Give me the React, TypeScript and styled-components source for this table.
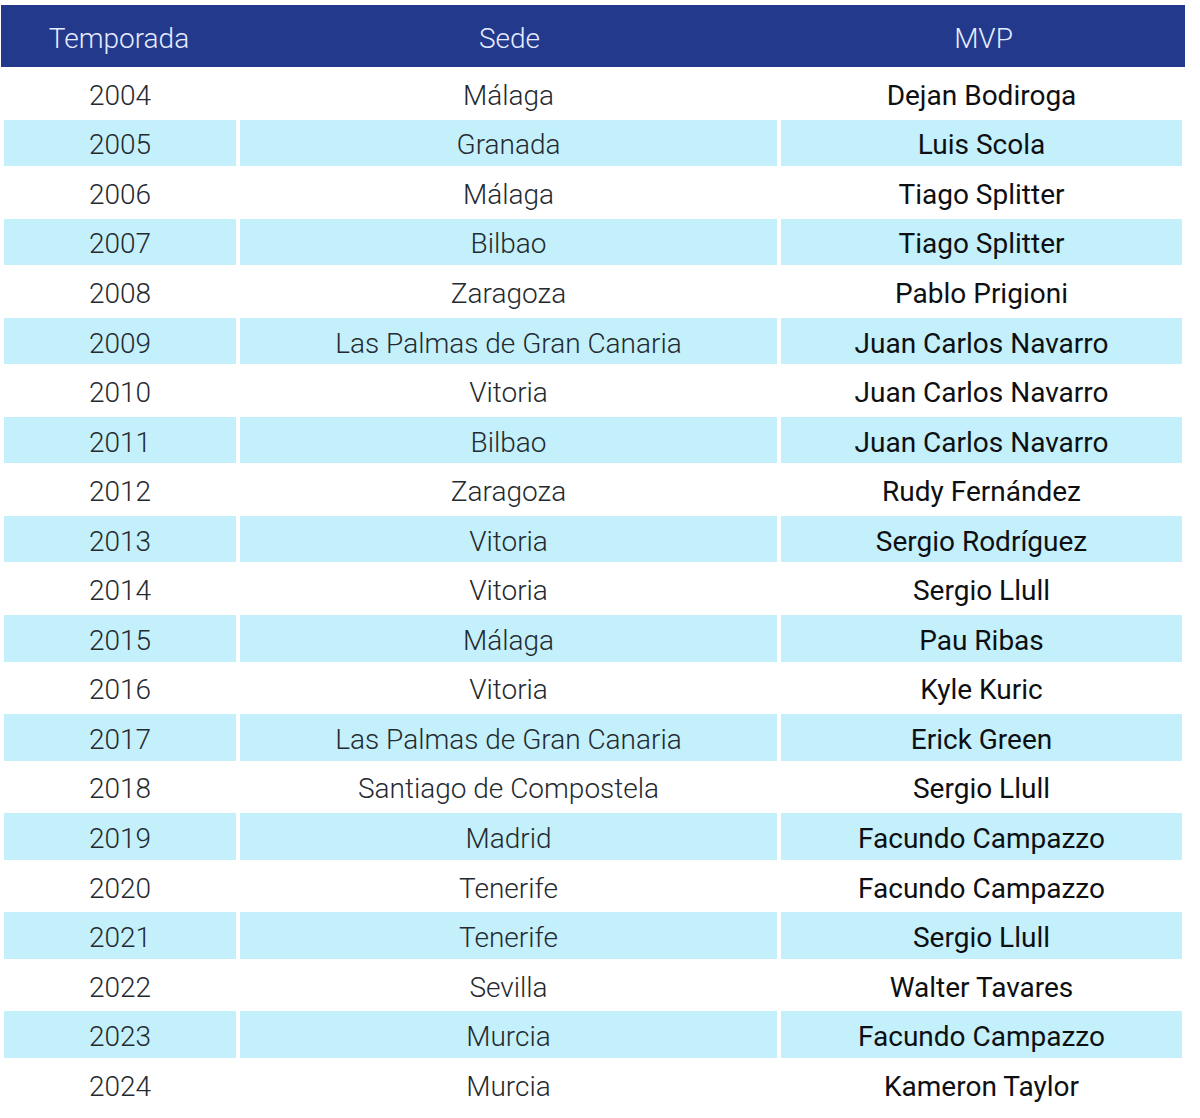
import React from 'react';
import styled, { createGlobalStyle } from 'styled-components';

const GlobalStyle = createGlobalStyle`
  html, body {
    margin: 0;
    padding: 0;
    background: #ffffff;
  }
  body {
    font-family: Roboto, "Liberation Sans", Arial, sans-serif;
  }
`;

const Page = styled.div`
  padding: 5px 0 0 1px;
  width: 1184px;
`;

const HeaderBar = styled.div`
  display: grid;
  grid-template-columns: 236px 545px 403px;
  height: 62px;
  background: #233a8c;
`;

const HeaderCell = styled.div`
  display: flex;
  align-items: center;
  justify-content: center;
  padding-top: 4px;
  font-weight: 300;
  font-size: 28px;
  color: #e6ecff;
`;

const Body = styled.div`
  display: flex;
  flex-direction: column;
  gap: 3px;
  padding: 3px 3px 0;
`;

const Row = styled.div`
  display: grid;
  grid-template-columns: 232px 537px 401px;
  column-gap: 4px;
  height: 46.55px;
`;

const Cell = styled.div<{ $striped: boolean; $bold?: boolean }>`
  display: flex;
  align-items: center;
  justify-content: center;
  padding-top: 4px;
  background: ${p => (p.$striped ? '#c3f0fb' : '#ffffff')};
  font-size: 28px;
  font-weight: ${p => (p.$bold ? 400 : 300)};
  color: ${p => (p.$bold ? '#0e0f12' : '#252a30')};
  white-space: nowrap;
`;

const rows: [string, string, string][] = [
  ['2004', 'Málaga', 'Dejan Bodiroga'],
  ['2005', 'Granada', 'Luis Scola'],
  ['2006', 'Málaga', 'Tiago Splitter'],
  ['2007', 'Bilbao', 'Tiago Splitter'],
  ['2008', 'Zaragoza', 'Pablo Prigioni'],
  ['2009', 'Las Palmas de Gran Canaria', 'Juan Carlos Navarro'],
  ['2010', 'Vitoria', 'Juan Carlos Navarro'],
  ['2011', 'Bilbao', 'Juan Carlos Navarro'],
  ['2012', 'Zaragoza', 'Rudy Fernández'],
  ['2013', 'Vitoria', 'Sergio Rodríguez'],
  ['2014', 'Vitoria', 'Sergio Llull'],
  ['2015', 'Málaga', 'Pau Ribas'],
  ['2016', 'Vitoria', 'Kyle Kuric'],
  ['2017', 'Las Palmas de Gran Canaria', 'Erick Green'],
  ['2018', 'Santiago de Compostela', 'Sergio Llull'],
  ['2019', 'Madrid', 'Facundo Campazzo'],
  ['2020', 'Tenerife', 'Facundo Campazzo'],
  ['2021', 'Tenerife', 'Sergio Llull'],
  ['2022', 'Sevilla', 'Walter Tavares'],
  ['2023', 'Murcia', 'Facundo Campazzo'],
  ['2024', 'Murcia', 'Kameron Taylor'],
];

export default function App() {
  return (
    <Page>
      <GlobalStyle />
      <HeaderBar>
        <HeaderCell>Temporada</HeaderCell>
        <HeaderCell>Sede</HeaderCell>
        <HeaderCell>MVP</HeaderCell>
      </HeaderBar>
      <Body>
        {rows.map(([year, sede, mvp], i) => {
          const striped = i % 2 === 1;
          return (
            <Row key={year}>
              <Cell $striped={striped}>{year}</Cell>
              <Cell $striped={striped}>{sede}</Cell>
              <Cell $striped={striped} $bold>{mvp}</Cell>
            </Row>
          );
        })}
      </Body>
    </Page>
  );
}
